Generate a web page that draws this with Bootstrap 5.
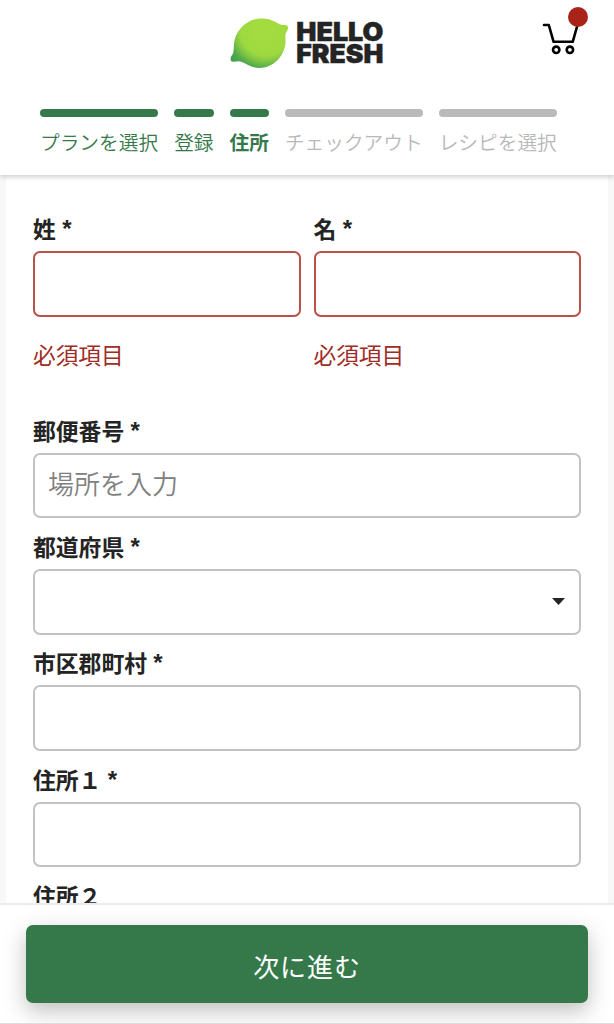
<!DOCTYPE html>
<html lang="ja">
<head>
<meta charset="utf-8">
<meta name="viewport" content="width=device-width, initial-scale=1">
<title>HelloFresh - 住所</title>
<link href="https://cdn.jsdelivr.net/npm/bootstrap@5.3.0/dist/css/bootstrap.min.css" rel="stylesheet">
<style>
  body { font-family: "Liberation Sans", "Noto Sans CJK JP", sans-serif; color: #242424; background: #f8f8f8; }
  .page { height: 1024px; }
  .site-head { height: 175px; z-index: 2; box-shadow: 0 1px 6px rgba(0,0,0,.25); }
  .head-top { height: 108px; }
  .cart { top: 7px; right: 26px; }
  .steps { gap: 16px; padding-left: 40px; }
  .step { font-size: 19.7px; line-height: 28px; font-weight: 350; color: #b8b8b8; white-space: nowrap; }
  .step::before { content: ""; display: block; height: 8px; border-radius: 4px; background: #bababa; margin: 1px 0 11.500px; }
  .step.done { color: #35794b; }
  .step.done::before { background: #35794b; }
  .step.now { font-weight: 700; }
  .sheet { margin: 0 6px; padding: 40px 27px 0; }
  .names { gap: 13px; height: 201.6px; }
  .field { height: 116.4px; }
  .f-label { display: block; font-size: 22.8px; line-height: 30px; height: 36px; font-weight: 700; white-space: pre; }
  .req { font-size: 24px; line-height: 1; vertical-align: 1px; }
  .box, .box:focus { height: 65.6px; border: 2px solid #c2c2c2; border-radius: 7px; padding: 0 13px; font-size: 26px; font-weight: 350; background-color: #fff; }
  .box::placeholder { color: #808080; opacity: 1; }
  .box.bad { border-color: #b8524b; }
  .error { color: #a02c26; font-size: 22.7px; line-height: 30px; font-weight: 400; margin-top: 24px; }
  .pick { background-image: url("data:image/svg+xml,%3Csvg xmlns='http://www.w3.org/2000/svg' viewBox='0 0 13 7'%3E%3Cpath d='M0 0h13L6.5 7z' fill='%23242424'/%3E%3C/svg%3E"); background-size: 13px 7px; background-position: right 14px center; }
  .foot { height: 121px; padding: 20px 26px 0; border-top: 2px solid #ebebeb; border-bottom: 1px solid #ddd; z-index: 2; }
  .next, .next:hover { height: 78px; background: #35794b; color: #fff; border-radius: 7px; font-size: 26px; letter-spacing: .9px; font-weight: 400; box-shadow: 0 8px 22px rgba(0,0,0,.25); }
</style>
</head>
<body>
<div class="page d-flex flex-column overflow-hidden">
  <header class="site-head bg-white position-relative flex-shrink-0">
    <div class="head-top">
      <svg class="d-block mx-auto" width="154" height="74" viewBox="0 0 154 74" role="img" aria-label="HelloFresh">
        <defs>
          <radialGradient id="lime" gradientUnits="userSpaceOnUse" cx="36" cy="30" r="44">
            <stop offset="0" stop-color="#a4dd3f"/><stop offset=".58" stop-color="#9ed940"/><stop offset=".72" stop-color="#80c544"/><stop offset=".87" stop-color="#52ab4b"/><stop offset="1" stop-color="#45a04b"/>
          </radialGradient>
        </defs>
        <path fill="url(#lime)" d="M1 61C0 59 1 56 2.500 54.500C4 52 3.500 48 4 44C5 31 16 19 31 18.500C40 18 45 22 50 24.500C53 25.500 56 24 57.500 26C59 28 57 31 56 33C54.500 36 56 39 55.500 43C54 57 43 68 29 68C22 68 17 64 12 62C8 60 3 63 1 61Z"/>
        <g font-family="Inter, sans-serif" font-weight="900" font-size="25.500" fill="#242424" stroke="#242424" stroke-width=".5">
          <text x="66.300" y="41.300" textLength="87" lengthAdjust="spacingAndGlyphs">HELLO</text>
          <text x="66.300" y="62.800" textLength="87" lengthAdjust="spacingAndGlyphs">FRESH</text>
        </g>
      </svg>
      <svg class="cart position-absolute" width="46" height="50" viewBox="0 0 46 50" aria-label="カート">
        <g fill="none" stroke="#000" stroke-width="2.600" stroke-linecap="round" stroke-linejoin="round">
          <path d="M2 18H6.800L11.600 34.800H30.700L35.200 19"/>
          <circle cx="14.200" cy="42.800" r="3.200"/><circle cx="27.900" cy="42.800" r="3.200"/>
        </g>
        <circle cx="36" cy="10" r="10" fill="#a92319"/>
      </svg>
    </div>
    <nav class="steps d-flex" aria-label="ステップ">
      <div class="step done">プランを選択</div>
      <div class="step done">登録</div>
      <div class="step done now">住所</div>
      <div class="step">チェックアウト</div>
      <div class="step">レシピを選択</div>
    </nav>
  </header>

  <main class="sheet bg-white flex-grow-1 overflow-hidden">
    <form>
      <div class="names d-flex">
        <div class="flex-fill">
          <label class="f-label" for="sei">姓 <span class="req">*</span></label>
          <input class="form-control box bad" id="sei">
          <div class="error">必須項目</div>
        </div>
        <div class="flex-fill">
          <label class="f-label" for="mei">名 <span class="req">*</span></label>
          <input class="form-control box bad" id="mei">
          <div class="error">必須項目</div>
        </div>
      </div>
      <div class="field"><label class="f-label" for="zip">郵便番号 <span class="req">*</span></label><input class="form-control box" id="zip" placeholder="場所を入力"></div>
      <div class="field"><label class="f-label" for="pref">都道府県 <span class="req">*</span></label><select class="form-select box pick" id="pref"><option></option></select></div>
      <div class="field"><label class="f-label" for="city">市区郡町村 <span class="req">*</span></label><input class="form-control box" id="city"></div>
      <div class="field"><label class="f-label" for="a1">住所１ <span class="req">*</span></label><input class="form-control box" id="a1"></div>
      <div class="field"><label class="f-label" for="a2">住所２</label><input class="form-control box" id="a2"></div>
    </form>
  </main>

  <footer class="foot bg-white flex-shrink-0 overflow-hidden position-relative">
    <button class="btn next w-100 px-0 pt-2 pb-0" type="button">次に進む</button>
  </footer>
</div>
<script src="https://cdn.jsdelivr.net/npm/bootstrap@5.3.0/dist/js/bootstrap.bundle.min.js"></script>
</body>
</html>
